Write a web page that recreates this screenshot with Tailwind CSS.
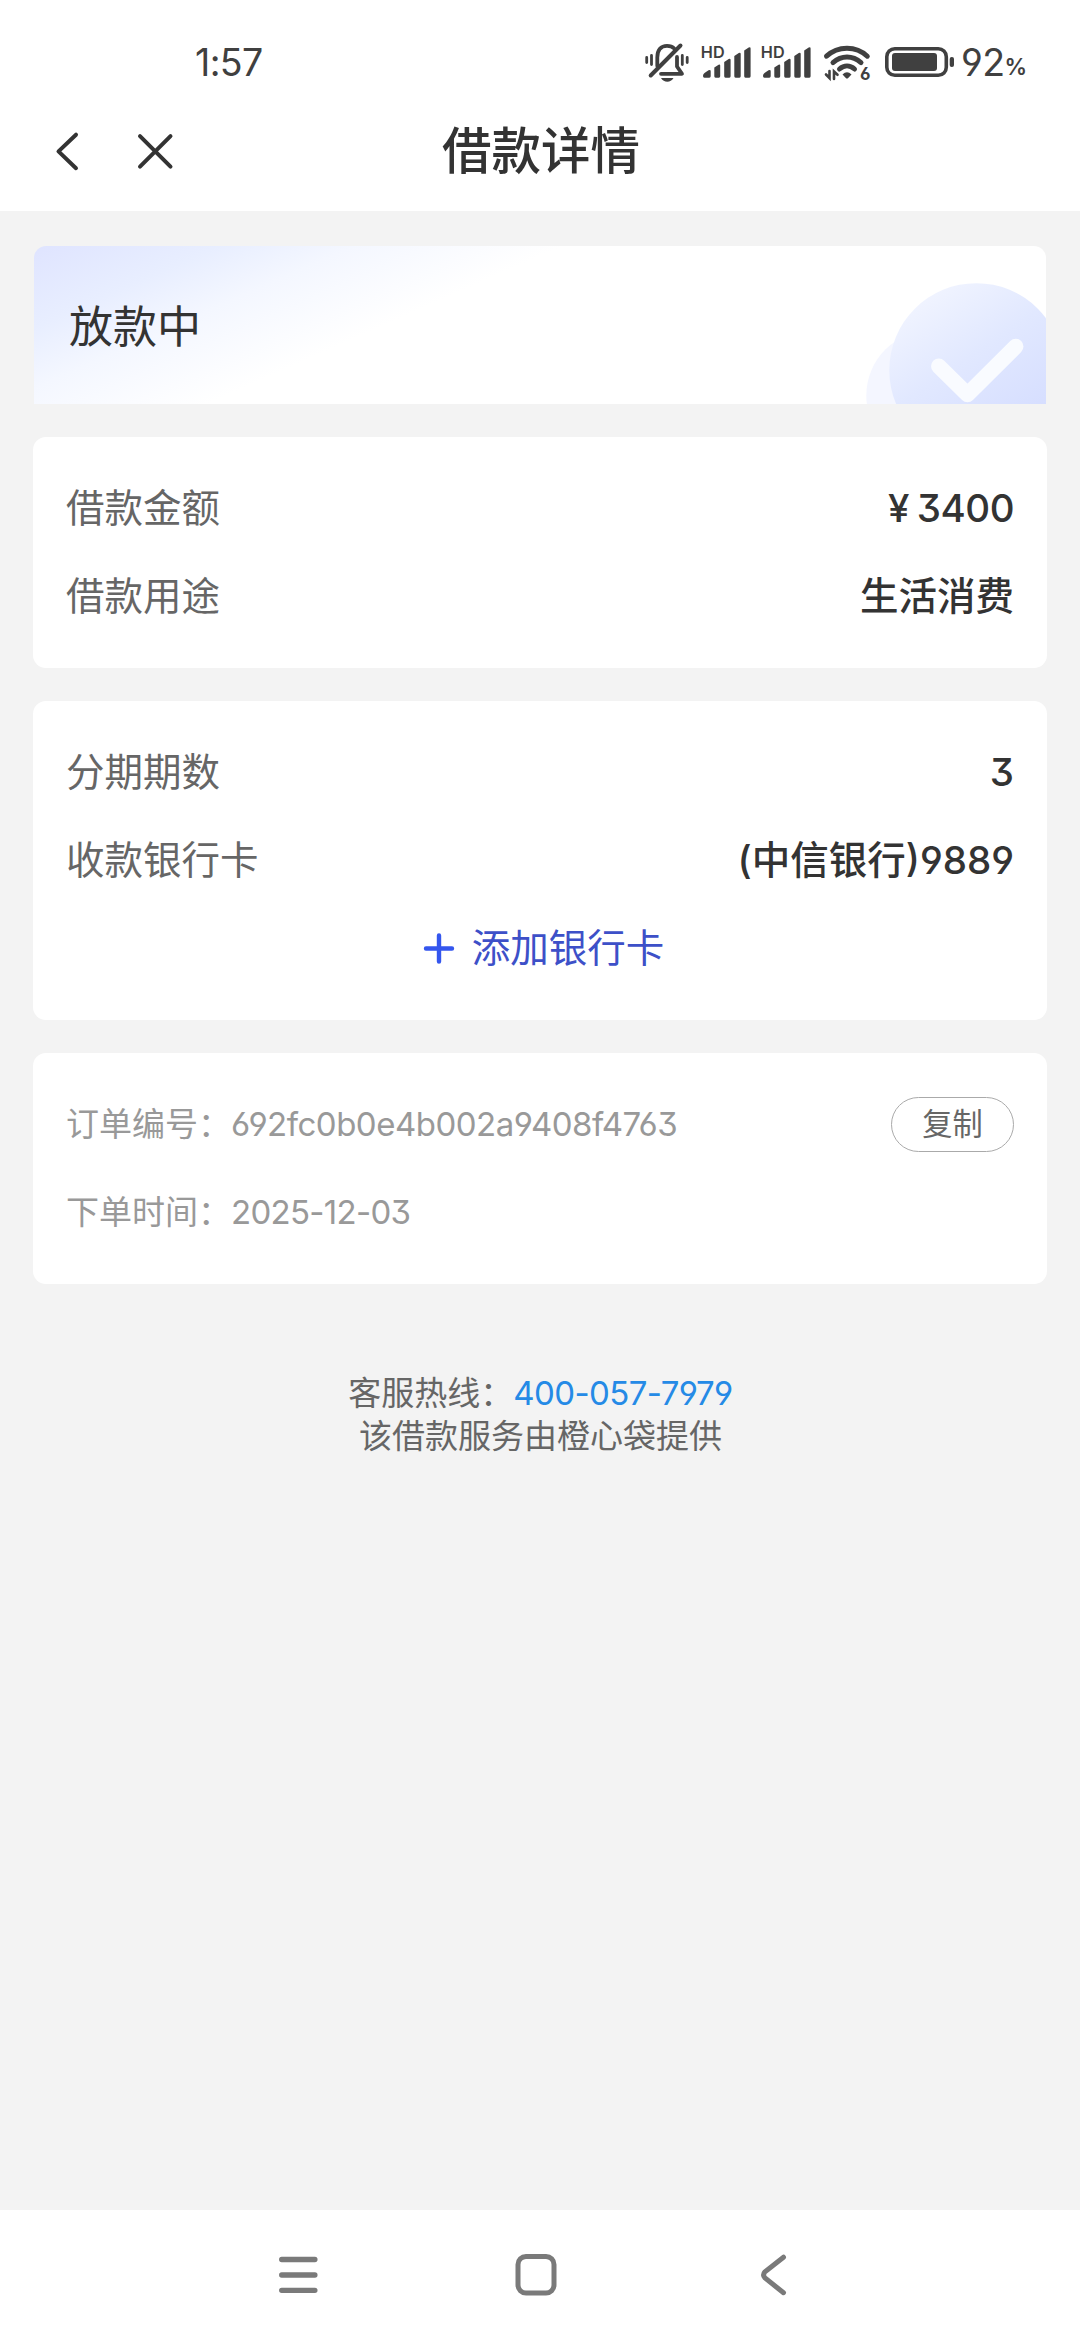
<!DOCTYPE html>
<html lang="zh-CN">
<head>
<meta charset="utf-8">
<title>借款详情</title>
<script src="https://cdn.jsdelivr.net/npm/@tailwindcss/browser@4"></script>
</head>
<body class="flex h-[2340px] w-[1080px] flex-col overflow-hidden bg-[#f3f3f3] font-['Inter','Noto_Sans_CJK_SC',sans-serif] text-[#333] [font-feature-settings:'cv03','cv04','cv09']">
  <!-- Status bar -->
  <div class="flex h-[84px] shrink-0 items-end bg-white text-[#404040]">
    <div class="ml-[195px] h-[44px] w-[449px] text-[37.5px] leading-[46px] tracking-[-0.6px]">1:57</div>
    <svg class="h-[44px] w-[46px]" viewBox="644 40 46 44" fill="none" stroke="currentColor" stroke-width="3.8" stroke-linecap="round">
      <path d="M646.7 57.500v5M651.500 55.500v9M682.300 55.500v9M687.200 57.500v5" stroke-width="2.800"/>
      <path d="M657.300 66V57.500C657.300 50 661 45.800 667 45.800C670 45.800 672.500 46.700 674.200 48.500"/>
      <path d="M677 57V66.500L682 73.800H661" stroke-linejoin="round"/>
      <path d="M680.500 45.500L650.700 75.500" stroke-width="4"/>
      <path d="M661 78h12.500c-1.500 2.500-3.700 3.700-6.200 3.700s-4.800-1.200-6.300-3.700z" fill="currentColor" stroke="none"/>
    </svg>
    <svg class="ml-[11px] h-[44px] w-[50px]" viewBox="701 40 50 44" fill="currentColor">
      <text x="700.700" y="58.200" font-size="16.200" font-weight="600" font-family="Inter" textLength="24">HD</text>
      <path d="M703 76q0-2 1.500-3l4-2.700q2.200-1 2.200 1v5q0 1.400-1.400 1.400h-4.900q-1.400 0-1.400-1.700zM714.300 67.500l4.300-2.800q1.600-.6 1.600.9v10.700q0 1.400-1.300 1.400h-3.300q-1.300 0-1.300-1.400zM724.200 62l4.500-3q1.900-.7 1.900.9v16.400q0 1.400-1.300 1.400h-3.800q-1.300 0-1.300-1.400zM734.300 56l4.500-3q1.900-.7 1.900.9v22.400q0 1.400-1.300 1.400h-3.800q-1.300 0-1.300-1.400zM744.200 50.500l4.500-3q1.900-.7 1.900.9v27.900q0 1.400-1.300 1.400h-3.800q-1.300 0-1.300-1.400z"/>
    </svg>
    <svg class="ml-[10px] h-[44px] w-[50px]" viewBox="701 40 50 44" fill="currentColor">
      <text x="700.700" y="58.200" font-size="16.200" font-weight="600" font-family="Inter" textLength="24">HD</text>
      <path d="M703 76q0-2 1.500-3l4-2.700q2.200-1 2.200 1v5q0 1.400-1.400 1.400h-4.900q-1.400 0-1.400-1.700zM714.300 67.500l4.300-2.800q1.600-.6 1.600.9v10.700q0 1.400-1.300 1.400h-3.300q-1.300 0-1.300-1.400zM724.200 62l4.500-3q1.900-.7 1.900.9v16.400q0 1.400-1.300 1.400h-3.800q-1.300 0-1.300-1.400zM734.300 56l4.500-3q1.900-.7 1.900.9v22.400q0 1.400-1.300 1.400h-3.800q-1.300 0-1.300-1.400zM744.200 50.500l4.500-3q1.900-.7 1.900.9v27.900q0 1.400-1.300 1.400h-3.800q-1.300 0-1.300-1.400z"/>
    </svg>
    <svg class="ml-[11px] h-[44px] w-[50px]" viewBox="822 40 50 44" fill="none" stroke="currentColor" stroke-width="5" stroke-linecap="round">
      <path d="M826.500 56.200C838 45.500 856 45.500 867.300 56.200M833 62.600C841.500 55 852.500 55 861 62.600M839.500 69C844 65 850 65 854.500 69"/>
      <path d="M842.500 74.500q4.500-4.500 9 0l-3.300 3.400q-1.200 1.200-2.400 0z" fill="currentColor" stroke="none"/>
      <path d="M826 74.500l3.500 3.500v-7M834 79v-7.500l3.500 3.300" stroke-width="2.600"/>
      <text x="860" y="79.900" font-size="17" font-weight="700" font-family="Inter" fill="currentColor" stroke="none">6</text>
    </svg>
    <svg class="ml-[12px] h-[44px] w-[72px]" viewBox="884 40 72 44" fill="none" stroke="currentColor" stroke-width="3.600">
      <rect x="886.800" y="48.700" width="59.500" height="26.600" rx="8"/>
      <rect x="892" y="53" width="45" height="18" rx="3" fill="currentColor" stroke="none"/>
      <rect x="949.700" y="57" width="4.300" height="10" rx="2" fill="currentColor" stroke="none"/>
    </svg>
    <div class="ml-[5px] flex h-[44px] text-[37.5px] leading-[46px] tracking-[-0.6px]">92<span class="text-[22.5px] leading-[54px] font-semibold">%</span></div>
  </div>

  <!-- Title bar -->
  <header class="flex h-[127px] shrink-0 items-start bg-white">
    <svg class="mt-[42px] ml-[50px] h-[50px] w-[36px]" viewBox="50 126 36 50" fill="none" stroke="#333" stroke-width="4" stroke-linecap="round" stroke-linejoin="round"><path d="M76 134.700L58.500 151.400L76 168.200"/></svg>
    <svg class="mt-[42px] ml-[44px] h-[50px] w-[50px]" viewBox="130 126 50 50" fill="none" stroke="#333" stroke-width="4" stroke-linecap="round"><path d="M140 136.200L170.500 166.600M170.500 136.200L140 166.600"/></svg>
    <h1 class="ml-[262px] mt-[30px] text-[49.5px] leading-[74px] font-medium">借款详情</h1>
  </header>

  <main class="flex flex-1 flex-col gap-[33px] px-[33px] pt-[34.5px]">
    <!-- Loan state -->
    <section class="mx-px flex h-[158px] overflow-hidden rounded-t-[12px] bg-[linear-gradient(156deg,#dfe4ff_0px,#e8eeff_75px,#f4f7ff_130px,#fff_215px)]">
      <div class="ml-[35px] mt-[48px] flex-1 text-[44px] leading-[66px]">放款中</div>
      <svg class="h-[158px] w-[187px]" viewBox="860 245.500 187 158" fill="none">
        <defs>
          <linearGradient id="disc" x1="0.15" y1="0.05" x2="0.700" y2="0.850"><stop offset="0" stop-color="#f2f5ff"/><stop offset="0.500" stop-color="#e1e8ff"/><stop offset="1" stop-color="#d6deff"/></linearGradient>
        </defs>
        <circle cx="932.300" cy="395" r="65" fill="#f4f6ff"/>
        <circle cx="977.300" cy="369.700" r="87" fill="url(#disc)"/>
        <path d="M939.800 365.700L968.500 394L1016.700 346" stroke="#f9fbff" stroke-width="15.500" stroke-linecap="round" stroke-linejoin="round"/>
      </svg>
    </section>

    <!-- Amount and purpose -->
    <section class="rounded-[13px] bg-white px-[33px] pt-[28.5px] pb-[26.5px] text-[38.5px]">
      <div class="flex h-[88px] items-center justify-between"><span class="text-[#666]">借款金额</span><span class="flex gap-[8px] font-medium tracking-[-0.5px]"><span>¥</span><span>3400</span></span></div>
      <div class="flex h-[88px] items-center justify-between"><span class="text-[#666]">借款用途</span><span class="font-medium">生活消费</span></div>
    </section>

    <!-- Instalments and card -->
    <section class="rounded-[13px] bg-white px-[33px] pt-[28.5px] pb-[26.5px] text-[38.5px]">
      <div class="flex h-[88px] items-center justify-between"><span class="text-[#666]">分期期数</span><span class="font-medium">3</span></div>
      <div class="flex h-[88px] items-center justify-between"><span class="text-[#666]">收款银行卡</span><span class="font-medium">(中信银行)9889</span></div>
      <div class="flex h-[88px] items-center justify-center gap-[16px] pl-[6px] text-[#3d50c8]">
        <svg class="h-[34px] w-[34px]" viewBox="0 0 34 34" stroke="#3456ee" stroke-width="4.400" stroke-linecap="round"><path d="M4 16.500h26M17 3.500v26"/></svg>
        <span>添加银行卡</span>
      </div>
    </section>

    <!-- Order -->
    <section class="rounded-[13px] bg-white px-[33px] py-[27.5px] text-[33px] text-[#999]">
      <div class="flex h-[88px] items-center"><span class="pt-px">订单编号：</span><span class="flex-1 pt-px tracking-[-0.5px]">692fc0b0e4b002a9408f4763</span><span class="flex h-[55px] w-[123px] items-center justify-center rounded-full border border-[#aaa] pt-px text-[30.25px] text-[#666]">复制</span></div>
      <div class="flex h-[88px] items-center"><span class="pt-px">下单时间：</span><span class="pt-px tracking-[-0.7px]">2025-12-03</span></div>
    </section>

    <footer class="mt-[55px] pl-px text-center text-[33px] leading-[43px] text-[#666]">
      <p>客服热线：<span class="tracking-[-0.6px] text-[#258ae6]">400-057-7979</span></p>
      <p>该借款服务由橙心袋提供</p>
    </footer>
  </main>

  <!-- System navigation -->
  <nav class="flex h-[130px] shrink-0 items-center justify-center gap-[192px] bg-white pr-[8px]">
    <svg class="h-[46px] w-[46px]" viewBox="275 2252 46 46" stroke="#7a7a7a" stroke-width="5.300" stroke-linecap="round"><path d="M281.700 2259.500h33.200M281.700 2275h33.200M281.700 2290.300h33.200"/></svg>
    <svg class="h-[46px] w-[46px]" viewBox="513 2252 46 46" fill="none" stroke="#7a7a7a" stroke-width="5"><rect x="518" y="2256.500" width="36" height="36.500" rx="8"/></svg>
    <svg class="h-[46px] w-[46px]" viewBox="751 2252 46 46" fill="none" stroke="#7a7a7a" stroke-width="5" stroke-linecap="round"><path d="M783.500 2257.200L765 2271.700Q762.200 2275 765 2278L783.500 2292.700"/></svg>
  </nav>
</body>
</html>
